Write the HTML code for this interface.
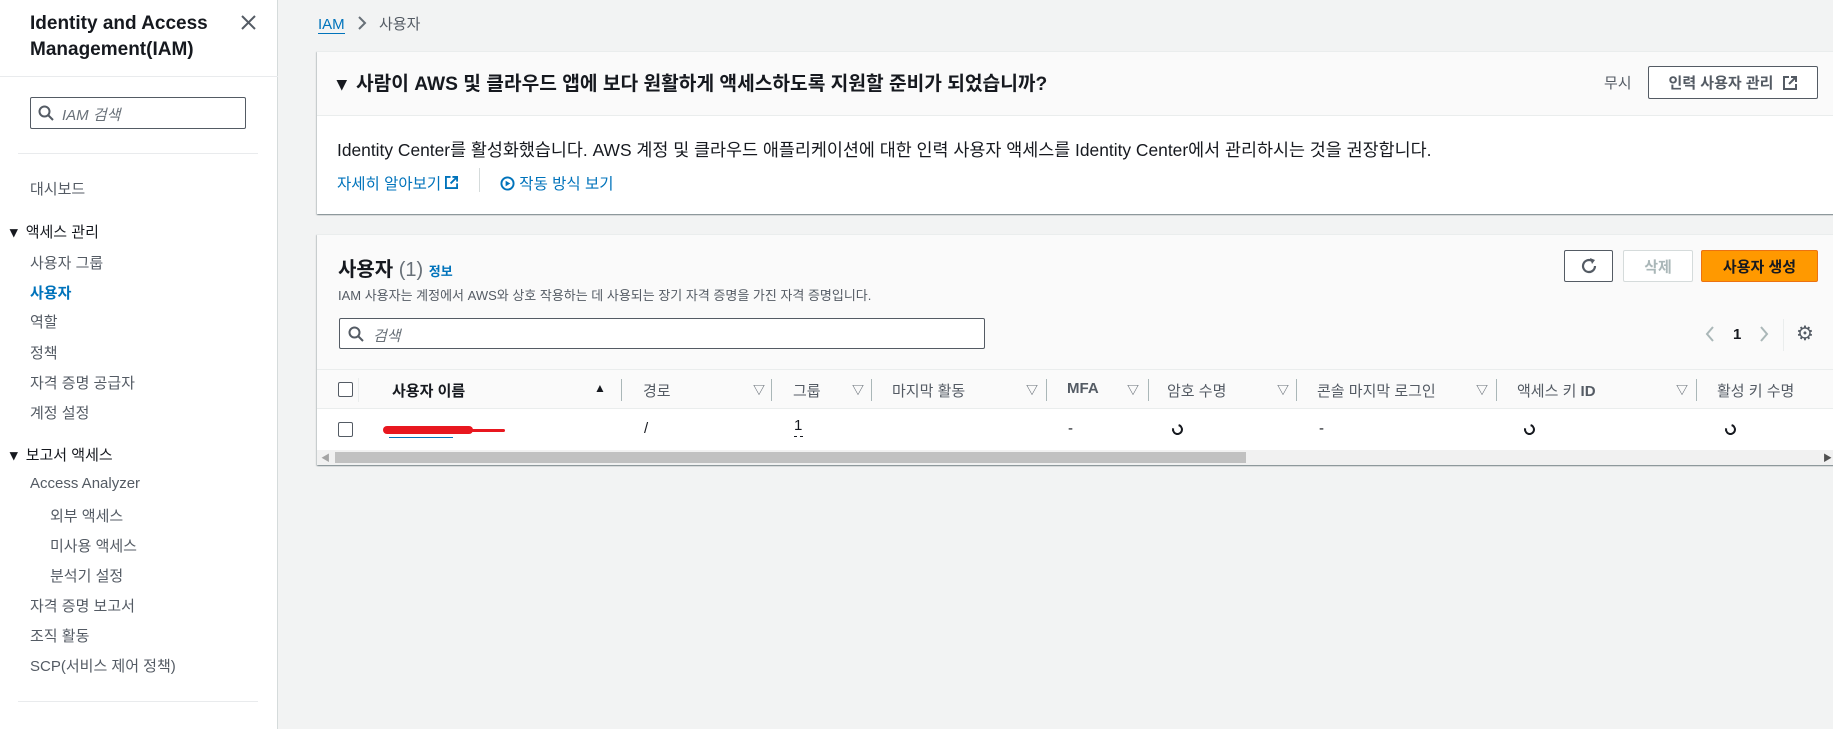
<!DOCTYPE html>
<html><head><meta charset="utf-8"><style>
*{box-sizing:border-box;margin:0;padding:0}
body{width:1833px;height:729px;overflow:hidden;background:#f2f3f3;font-family:"Liberation Sans","Noto Sans CJK KR",sans-serif;color:#16191f;position:relative;font-size:16px}
.a{position:absolute;white-space:nowrap}
#side{position:absolute;left:0;top:0;width:278px;height:729px;background:#fff;border-right:1px solid #d5dbdb}
.nav{position:absolute;left:30px;font-size:15px;color:#545b64}
.hr{position:absolute;height:1px;background:#e9ebed}
.panel{position:absolute;left:317px;width:1530px;background:#fff;box-shadow:0 1px 1px rgba(0,28,36,.3),1px 1px 1px rgba(0,28,36,.15),-1px 1px 1px rgba(0,28,36,.15);border-top:1px solid #eaeded}
.btn{position:absolute;border:1px solid #545b64;background:#fff;font-size:15px;font-weight:bold;color:#545b64;display:flex;align-items:center;justify-content:center;border-radius:2px}
.th{position:absolute;font-size:15px;color:#545b64}
.tri{position:absolute;font-size:12px;color:#687078;font-weight:bold}
.sep{position:absolute;width:1px;height:22px;background:#aab7b8}
.spin{position:absolute;top:15px;width:11px;height:11px;border:2px solid #16191f;border-top-color:transparent;border-radius:50%;transform:rotate(-30deg)}
</style></head><body>
<div id="side">
 <div class="a" style="left:30px;top:11px;font-size:19px;font-weight:bold;line-height:26px">Identity and Access<br>Management(IAM)</div>
 <svg class="a" style="left:241px;top:15px" width="15" height="15" viewBox="0 0 15 15"><path d="M1 1L14 14M14 1L1 14" stroke="#545b64" stroke-width="2"/></svg>
 <div class="hr" style="left:0;top:76px;width:278px"></div>
 <div class="a" style="left:30px;top:97px;width:216px;height:32px;border:1px solid #545b64;border-radius:2px"></div>
 <svg class="a" style="left:38px;top:105px" width="16" height="16" viewBox="0 0 16 16"><circle cx="6.5" cy="6.5" r="5" fill="none" stroke="#545b64" stroke-width="2"/><path d="M10 10L15 15" stroke="#545b64" stroke-width="2"/></svg>
 <div class="a" style="left:62px;top:104px;font-size:15px;font-style:italic;color:#687078">IAM 검색</div>
 <div class="hr" style="left:18px;top:153px;width:240px"></div>
 <div class="nav" style="top:178px">대시보드</div>
 <div class="nav" style="top:221px;left:10px;color:#16191f;font-weight:bold">▾ <span style="font-weight:normal;margin-left:4px">액세스 관리</span></div>
 <div class="nav" style="top:252px">사용자 그룹</div>
 <div class="nav" style="top:282px;color:#0073bb;font-weight:bold">사용자</div>
 <div class="nav" style="top:311px">역할</div>
 <div class="nav" style="top:342px">정책</div>
 <div class="nav" style="top:372px">자격 증명 공급자</div>
 <div class="nav" style="top:402px">계정 설정</div>
 <div class="nav" style="top:444px;left:10px;color:#16191f;font-weight:bold">▾ <span style="font-weight:normal;margin-left:4px">보고서 액세스</span></div>
 <div class="nav" style="top:475px">Access Analyzer</div>
 <div class="nav" style="top:505px;left:50px">외부 액세스</div>
 <div class="nav" style="top:535px;left:50px">미사용 액세스</div>
 <div class="nav" style="top:565px;left:50px">분석기 설정</div>
 <div class="nav" style="top:595px">자격 증명 보고서</div>
 <div class="nav" style="top:625px">조직 활동</div>
 <div class="nav" style="top:655px">SCP(서비스 제어 정책)</div>
 <div class="hr" style="left:18px;top:701px;width:240px"></div>
</div>

<div class="a" style="left:318px;top:13px;font-size:15px;color:#545b64"><span style="color:#0073bb;border-bottom:1px solid #0073bb">IAM</span> <svg width="10" height="14" viewBox="0 0 10 14" style="margin:0 8px;vertical-align:-1px"><path d="M2 1L8 7L2 13" fill="none" stroke="#687078" stroke-width="2"/></svg> 사용자</div>

<div class="panel" style="top:51px;height:163px">
 <div style="height:64px;background:#fafafa;border-bottom:1px solid #eaeded"></div>
 <div class="a" style="left:20px;top:16px;font-size:19.2px;font-weight:bold">▾ <span style="margin-left:4px">사람이 AWS 및 클라우드 앱에 보다 원활하게 액세스하도록 지원할 준비가 되었습니까?</span></div>
 <div class="a" style="left:1287px;top:20px;font-size:15px;color:#545b64">무시</div>
 <div class="btn" style="left:1331px;top:14px;width:170px;height:33px">인력 사용자 관리 <svg style="margin-left:10px" width="14" height="14" viewBox="0 0 14 14"><path d="M6 1H1V13H13V8M8 1H13V6M13 1L6 8" fill="none" stroke="#545b64" stroke-width="2"/></svg></div>
 <div class="a" style="left:20px;top:85px;font-size:17.4px">Identity Center를 활성화했습니다. AWS 계정 및 클라우드 애플리케이션에 대한 인력 사용자 액세스를 Identity Center에서 관리하시는 것을 권장합니다.</div>
 <div class="a" style="left:20px;top:120px;font-size:15.5px;color:#0073bb">자세히 알아보기 <svg width="13" height="13" viewBox="0 0 14 14"><path d="M6 1H1V13H13V8M8 1H13V6M13 1L6 8" fill="none" stroke="#0073bb" stroke-width="2"/></svg></div>
 <div class="a" style="left:162px;top:116px;width:1px;height:24px;background:#d5dbdb"></div>
 <div class="a" style="left:183px;top:120px;font-size:15.5px;color:#0073bb"><svg width="15" height="15" viewBox="0 0 16 16" style="vertical-align:-2px"><circle cx="8" cy="8" r="6.5" fill="none" stroke="#0073bb" stroke-width="2"/><path d="M6 5V11L11 8Z" fill="#0073bb"/></svg> 작동 방식 보기</div>
</div>

<div class="panel" style="top:234px;height:231px;background:#fafafa">
 <div class="a" style="left:21px;top:18px;font-size:20px;font-weight:bold">사용자 <span style="font-weight:normal;color:#687078">(1)</span> <span style="font-size:13px;color:#0073bb;font-weight:bold">정보</span></div>
 <div class="a" style="left:21px;top:50px;font-size:13px;color:#545b64">IAM 사용자는 계정에서 AWS와 상호 작용하는 데 사용되는 장기 자격 증명을 가진 자격 증명입니다.</div>
 <div class="btn" style="left:1247px;top:15px;width:49px;height:32px"><svg width="18" height="18" viewBox="0 0 18 18"><path d="M15 9A6 6 0 1 1 12 3.8" fill="none" stroke="#545b64" stroke-width="2.2"/><path d="M10 1L15 3L12 7Z" fill="#545b64"/></svg></div>
 <div class="btn" style="left:1306px;top:15px;width:70px;height:32px;border-color:#d5dbdb;color:#aab7b8">삭제</div>
 <div class="btn" style="left:1384px;top:15px;width:117px;height:32px;border-color:#ec7211;background:#ff9900;color:#16191f">사용자 생성</div>
 <div class="a" style="left:22px;top:83px;width:646px;height:31px;border:1px solid #545b64;border-radius:2px;background:#fff"></div>
 <svg class="a" style="left:31px;top:91px" width="16" height="16" viewBox="0 0 16 16"><circle cx="6.5" cy="6.5" r="5" fill="none" stroke="#545b64" stroke-width="2"/><path d="M10 10L15 15" stroke="#545b64" stroke-width="2"/></svg>
 <div class="a" style="left:56px;top:90px;font-size:15px;font-style:italic;color:#687078">검색</div>
 <svg class="a" style="left:1388px;top:91px" width="10" height="16" viewBox="0 0 10 16"><path d="M8 1L2 8L8 15" fill="none" stroke="#aab7b8" stroke-width="2"/></svg>
 <div class="a" style="left:1416px;top:91px;font-size:15px;font-weight:bold">1</div>
 <svg class="a" style="left:1442px;top:91px" width="10" height="16" viewBox="0 0 10 16"><path d="M2 1L8 8L2 15" fill="none" stroke="#aab7b8" stroke-width="2"/></svg>
 <div class="a" style="left:1466px;top:84px;width:1px;height:32px;background:#eaeded"></div>
 <div class="a" style="left:1479px;top:86px;font-size:20px;color:#545b64">⚙</div>
 <div class="a" style="left:0;top:134px;width:1530px;height:40px;border-top:1px solid #eaeded;border-bottom:1px solid #eaeded">
  <div class="a" style="left:21px;top:12px;width:15px;height:15px;border:1.5px solid #545b64;border-radius:2px;background:#fff"></div>
  <div class="a" style="left:41px;top:8px;width:1px;height:24px;background:#eaeded"></div>
  <div class="th" style="left:75px;top:10px;color:#16191f;font-weight:bold">사용자 이름</div><div class="tri" style="left:277px;top:11px;color:#16191f">▲</div><div class="sep" style="left:304px;top:9px"></div>
  <div class="th" style="left:326px;top:10px">경로</div><div class="tri" style="left:436px;top:11px">▽</div><div class="sep" style="left:454px;top:9px"></div>
  <div class="th" style="left:476px;top:10px">그룹</div><div class="tri" style="left:535px;top:11px">▽</div><div class="sep" style="left:554px;top:9px"></div>
  <div class="th" style="left:575px;top:10px">마지막 활동</div><div class="tri" style="left:709px;top:11px">▽</div><div class="sep" style="left:729px;top:9px"></div>
  <div class="th" style="left:750px;top:10px;font-weight:bold">MFA</div><div class="tri" style="left:810px;top:11px">▽</div><div class="sep" style="left:831px;top:9px"></div>
  <div class="th" style="left:850px;top:10px">암호 수명</div><div class="tri" style="left:960px;top:11px">▽</div><div class="sep" style="left:979px;top:9px"></div>
  <div class="th" style="left:1000px;top:10px">콘솔 마지막 로그인</div><div class="tri" style="left:1159px;top:11px">▽</div><div class="sep" style="left:1179px;top:9px"></div>
  <div class="th" style="left:1200px;top:10px">액세스 키 <b>ID</b></div><div class="tri" style="left:1359px;top:11px">▽</div><div class="sep" style="left:1379px;top:9px"></div>
  <div class="th" style="left:1400px;top:10px">활성 키 수명</div>
 </div>
 <div class="a" style="left:0;top:174px;width:1530px;height:41px;background:#fff">
  <div class="a" style="left:21px;top:13px;width:15px;height:15px;border:1.5px solid #545b64;border-radius:2px"></div>
  <div class="a" style="left:66px;top:17px;width:90px;height:8px;background:#e8171f;border-radius:4px"></div>
  <div class="a" style="left:150px;top:20px;width:38px;height:3px;background:#e8171f;border-radius:2px"></div>
  <div class="a" style="left:72px;top:28px;width:64px;height:1px;background:#0073bb"></div>
  <div class="a" style="left:327px;top:11px;font-size:15px">/</div>
  <div class="a" style="left:477px;top:8px;font-size:15px">1</div>
  <div class="a" style="left:477px;top:27px;width:9px;border-top:1px dashed #16191f"></div>
  <div class="a" style="left:751px;top:11px;font-size:15px">-</div>
  <div class="spin" style="left:855px"></div>
  <div class="a" style="left:1002px;top:11px;font-size:15px">-</div>
  <div class="spin" style="left:1207px"></div>
  <div class="spin" style="left:1408px"></div>
 </div>
 <div class="a" style="left:0;top:215px;width:1530px;height:15px;background:#f1f1f1">
  <div class="a" style="left:18px;top:2px;width:911px;height:11px;background:#c1c1c1"></div>
  <div class="a" style="left:4px;top:1px;font-size:9px;color:#a3a3a3">◀</div>
  <div class="a" style="left:1506px;top:1px;font-size:9px;color:#505050">▶</div>
 </div>
</div>
</body></html>
